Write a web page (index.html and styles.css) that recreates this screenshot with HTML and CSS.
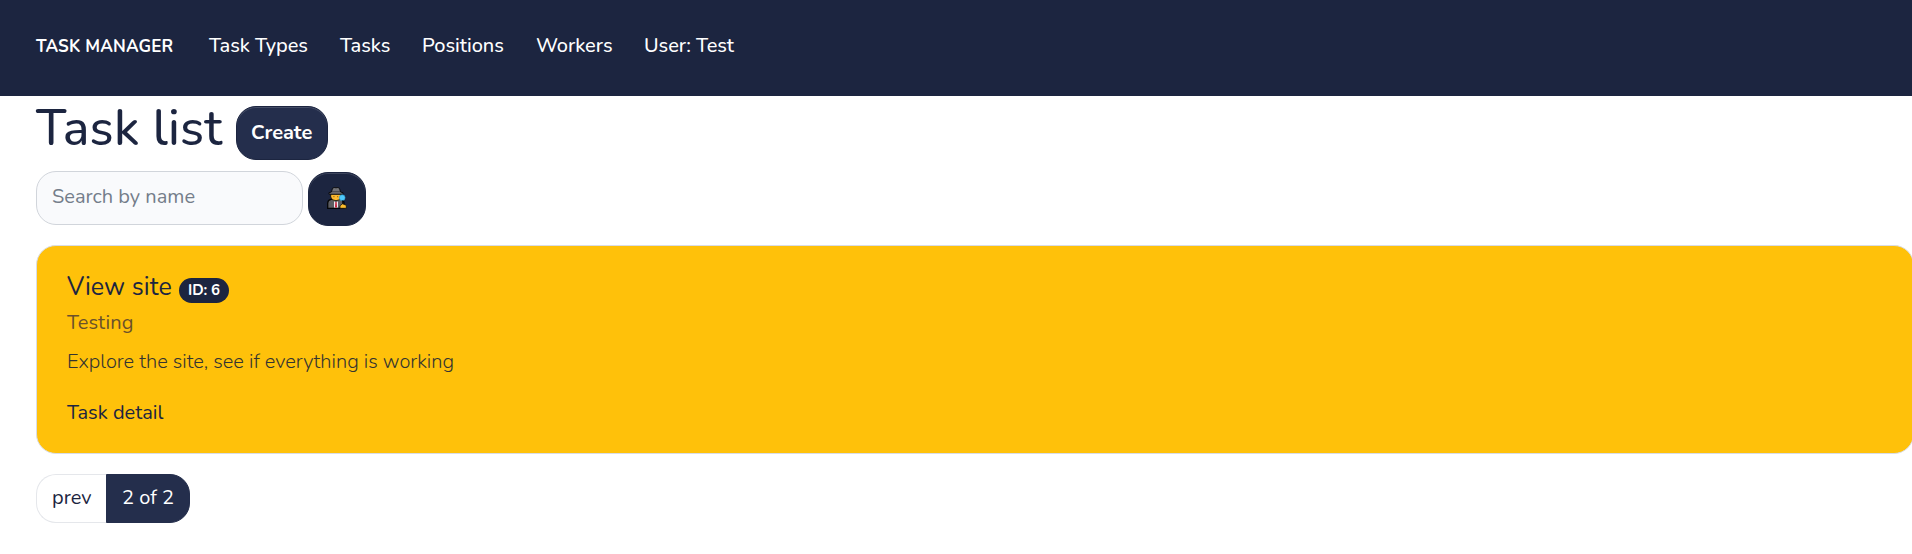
FILE: index.html
```html
<!DOCTYPE html>
<html lang="en">
<head>
<meta charset="utf-8">
<title>Task manager</title>
<link rel="stylesheet" href="styles.css">
</head>
<body>
<nav class="navbar">
  <a class="brand">TASK MANAGER</a>
  <a class="link types">Task Types</a>
  <a class="link tasks">Tasks</a>
  <a class="link positions">Positions</a>
  <a class="link workers">Workers</a>
  <a class="link user">User: Test</a>
</nav>
<main class="content">
  <header class="heading">
    <h1 class="title">Task list</h1>
    <a class="btn create">Create</a>
  </header>
  <form class="search">
    <input class="field" type="text" placeholder="Search by name">
    <button class="btn find" type="button" aria-label="Search">
      <svg class="detective" viewBox="0 0 20 22" width="20" height="22">
        <path d="M.7 21.3V16Q.7 13 4 12.3H14Q17 13 17 16V21.3Z" fill="#5d5d61" stroke="#050608" stroke-width="1.3"/>
        <path d="M3.7 7H14.3V10Q13.5 13.7 9 13.7Q4.5 13.7 3.7 10Z" fill="#fdba2e" stroke="#050608" stroke-width=".8"/>
        <path d="M4.5 5L5.5 1.3Q7 0 9 .8Q11 0 12.5 1.3L13.5 5L16 5.7V7.2H2V5.7Z" fill="#737377" stroke="#050608" stroke-width=".9"/>
        <path d="M5 4.7H13" stroke="#46464a"/>
        <path d="M6.3 9.7H7.5M10 9.7H11.2" stroke="#714b18" stroke-width=".8"/>
        <path d="M7 14.3L9 15.3L11 14.3V20.6H7Z" fill="#eeeaf0"/>
        <path d="M8.3 15H9.7L10 20.6H8Z" fill="#c3233c"/>
        <circle cx="15.2" cy="10.7" r="2.9" fill="#4fc9fa" stroke="#268fc0" stroke-width=".6"/>
        <path d="M15.8 13.5V17" stroke="#050608" stroke-width="1.2"/>
        <path d="M13 21.3V18.7L15.5 16.8L19.3 18.3V21.3Z" fill="#fdbd2d" stroke="#050608" stroke-width=".7"/>
      </svg>
    </button>
  </form>
  <article class="card">
    <div class="card-head">
      <h2 class="card-title">View site</h2>
      <span class="badge">ID: 6</span>
    </div>
    <div class="kind"><span>Testing</span></div>
    <p class="description"><span>Explore the site, see if everything is working</span></p>
    <a class="detail">Task detail</a>
  </article>
  <div class="pagination">
    <a class="page prev">prev</a>
    <span class="page current">2 of 2</span>
  </div>
</main>
</body>
</html>
```
FILE: styles.css
```css
* { box-sizing: border-box; }
body { margin: 0; overflow: hidden; background: #fff; color: #1c2540; font: 400 20px/30px Nunito, Lato, sans-serif; white-space: nowrap; }
h1, h2, p { margin: 0; font-weight: 400; }
.navbar { display: flex; align-items: baseline; height: 96px; padding: 31px 36px; background: #1c2540; color: #fff; }
.brand { width: 173px; font-size: 17px; font-weight: 700; letter-spacing: .18px; }
.link { font-weight: 500; letter-spacing: -.05px; }
.types { width: 131px; }
.tasks { width: 82px; }
.positions { width: 114px; }
.workers { width: 108px; }
.content { padding-left: 36px; }
.heading { display: flex; height: 75px; padding-top: 10px; }
.title { width: 200px; font-size: 50px; font-weight: 500; line-height: 46px; letter-spacing: .2px; }
.btn { height: 54px; border: 1px solid #1c2540; border-radius: 20px; color: #fff; box-shadow: inset 0 1px 0 rgba(255,255,255,.15); }
.create { width: 92px; padding: 11px 14px; background: #242e4c; font-weight: 700; letter-spacing: -.05px; }
.search { display: flex; gap: 5px; height: 74px; margin: 0; }
.field { width: 267px; height: 54px; padding: 0 15px 3px; border: 1px solid #d1d5db; border-radius: 20px; background: #f9fafc; color: #6b7280; font: 400 20px/30px Nunito, Lato, sans-serif; }
.field::placeholder { color: #747d8a; opacity: 1; }
.find { display: flex; justify-content: center; align-items: center; width: 58px; margin-top: 1px; padding: 0 0 2px; background: #1c2540; }
.card { width: 1878px; height: 209px; padding: 25px 30px; border: 1px solid #d9dde6; border-radius: 20px; background: #ffc10a; }
.card-head { display: flex; height: 37px; }
.card-title { width: 112px; font-size: 25px; line-height: 33px; letter-spacing: .1px; }
.badge { width: 50px; height: 25px; margin-top: 7px; padding-left: 9px; border-radius: 13px; background: #1c2540; color: #fff; font-size: 15px; font-weight: 700; line-height: 24px; letter-spacing: -.1px; }
.kind { height: 39px; color: #6b512b; letter-spacing: .15px; }
.description { height: 51px; font-weight: 300; color: #343431; }
.detail { display: block; }
.pagination { display: flex; height: 49px; margin-top: 20px; }
.page { height: 49px; padding: 8px 15px; border: 1px solid #e5e7eb; }
.prev { width: 70px; border-right: 0; border-radius: 20px 0 0 20px; }
.current { width: 84px; border-color: #242e4c; border-radius: 0 20px 20px 0; background: #242e4c; color: #fff; }
```
